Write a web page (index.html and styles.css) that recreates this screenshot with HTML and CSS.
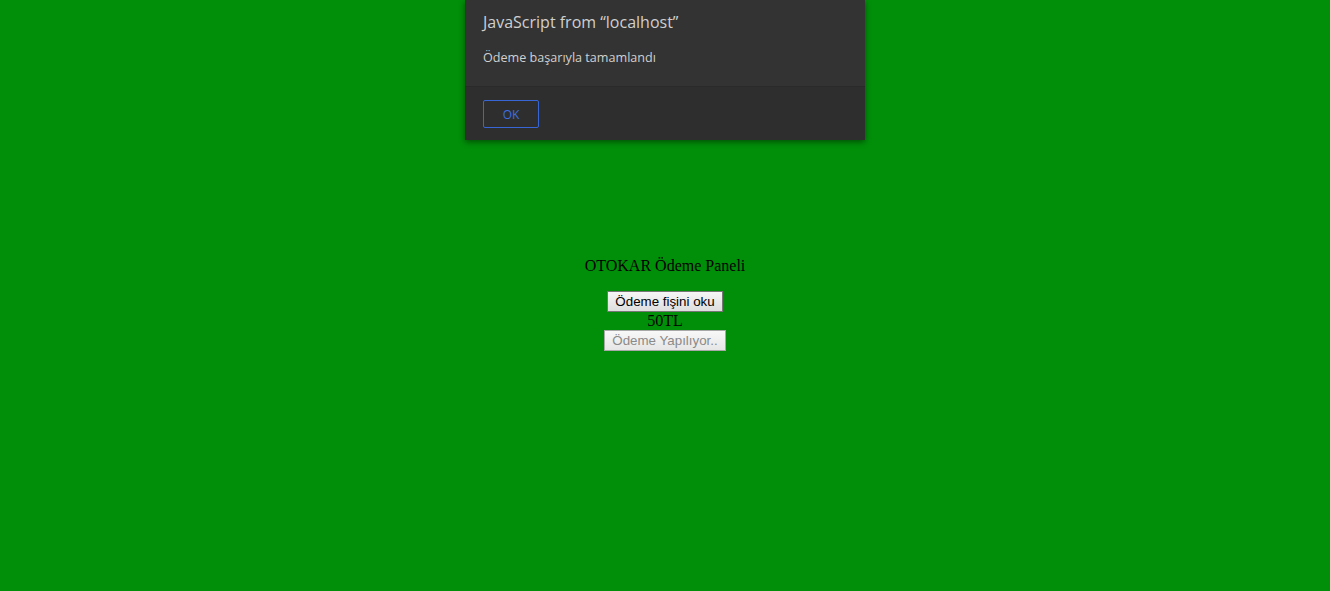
FILE: index.html
```html
<!DOCTYPE html>
<html lang="tr">
<head>
<meta charset="utf-8">
<title>OTOKAR Ödeme Paneli</title>
<link rel="stylesheet" href="styles.css">
</head>
<body>
<main class="panel">
  <div class="title">OTOKAR Ödeme Paneli</div>
  <button class="btn">Ödeme fişini oku</button>
  <div class="amount">50TL</div>
  <button class="btn" disabled>Ödeme Yapılıyor..</button>
</main>
<div class="dialog">
  <div class="dialog-body">
    <div class="dialog-title">JavaScript from “localhost”</div>
    <div class="dialog-msg">Ödeme başarıyla tamamlandı</div>
  </div>
  <div class="dialog-footer">
    <button class="ok">OK</button>
  </div>
</div>
</body>
</html>
```
FILE: styles.css
```css
html, body {
  margin: 0;
  height: 100%;
}
body {
  background: #018f09;
  font-family: "Liberation Serif", "Times New Roman", serif;
  font-size: 16px;
  color: #000;
}
.panel {
  display: flex;
  flex-direction: column;
  align-items: center;
  padding-top: 257px;
}
.title {
  line-height: 18px;
  margin-bottom: 16px;
}
.btn {
  font-family: "Liberation Sans", Arial, sans-serif;
  font-size: 13.33px;
  padding: 1px 7.5px;
  height: 21px;
  border: 1px solid #767676;
  border-radius: 0;
  background: linear-gradient(#f6f6f6, #dedede);
  color: #000;
}
.btn:disabled {
  color: #8a8a8a;
  border-color: #a8a8a8;
  background: linear-gradient(#f8f8f8, #e6e6e6);
}
.amount {
  line-height: 18px;
}
.dialog {
  position: absolute;
  top: 0;
  left: 465px;
  width: 400px;
  height: 140px;
  display: flex;
  flex-direction: column;
  background: #333333;
  box-shadow: 0 2px 6px rgba(0,0,0,0.45);
  font-family: "Open Sans", "Noto Sans", sans-serif;
}
.dialog-body {
  height: 86px;
  padding: 0 18px;
  border-bottom: 1px solid #2a2a2a;
}
.dialog-title {
  margin-top: 11px;
  font-size: 16px;
  line-height: 22px;
  color: #cfcfcf;
}
.dialog-msg {
  margin-top: 17px;
  font-size: 12.6px;
  line-height: 16px;
  color: #d0d0d0;
}
.dialog-footer {
  flex: 1;
  background: #2e2e2e;
  padding: 13px 18px 0;
}
.ok {
  width: 56px;
  height: 28px;
  background: transparent;
  border: 1px solid #3866d6;
  border-radius: 2px;
  color: #3d6fe0;
  font-family: "Open Sans", "Noto Sans", sans-serif;
  font-size: 12px;
  padding: 0;
}
```
